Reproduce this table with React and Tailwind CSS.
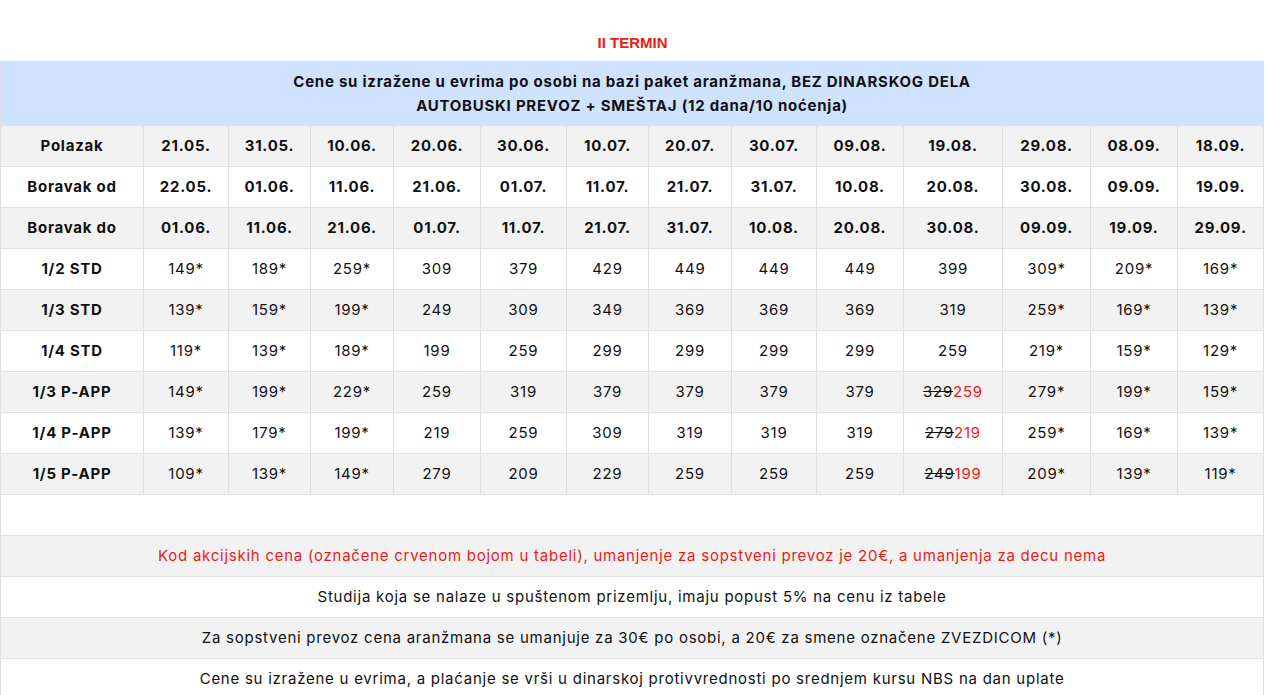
import React from "react";

const widths = [143, 85, 82, 83, 87, 86, 82, 83, 85, 87, 99, 88, 87, 86];

const dateRows = [
  ["Polazak", ["21.05.", "31.05.", "10.06.", "20.06.", "30.06.", "10.07.", "20.07.", "30.07.", "09.08.", "19.08.", "29.08.", "08.09.", "18.09."]],
  ["Boravak od", ["22.05.", "01.06.", "11.06.", "21.06.", "01.07.", "11.07.", "21.07.", "31.07.", "10.08.", "20.08.", "30.08.", "09.09.", "19.09."]],
  ["Boravak do", ["01.06.", "11.06.", "21.06.", "01.07.", "11.07.", "21.07.", "31.07.", "10.08.", "20.08.", "30.08.", "09.09.", "19.09.", "29.09."]],
];

const priceRows = [
  ["1/2 STD", ["149*", "189*", "259*", "309", "379", "429", "449", "449", "449", "399", "309*", "209*", "169*"]],
  ["1/3 STD", ["139*", "159*", "199*", "249", "309", "349", "369", "369", "369", "319", "259*", "169*", "139*"]],
  ["1/4 STD", ["119*", "139*", "189*", "199", "259", "299", "299", "299", "299", "259", "219*", "159*", "129*"]],
  ["1/3 P-APP", ["149*", "199*", "229*", "259", "319", "379", "379", "379", "379", ["329", "259"], "279*", "199*", "159*"]],
  ["1/4 P-APP", ["139*", "179*", "199*", "219", "259", "309", "319", "319", "319", ["279", "219"], "259*", "169*", "139*"]],
  ["1/5 P-APP", ["109*", "139*", "149*", "279", "209", "229", "259", "259", "259", ["249", "199"], "209*", "139*", "119*"]],
];

const notes = [
  ["Kod akcijskih cena (označene crvenom bojom u tabeli), umanjenje za sopstveni prevoz je 20€, a umanjenja za decu nema", true],
  ["Studija koja se nalaze u spuštenom prizemlju, imaju popust 5% na cenu iz tabele", false],
  ["Za sopstveni prevoz cena aranžmana se umanjuje za 30€ po osobi, a 20€ za smene označene ZVEZDICOM (*)", false],
  ["Cene su izražene u evrima, a plaćanje se vrši u dinarskoj protivvrednosti po srednjem kursu NBS na dan uplate", false],
];

const cell = "border border-[#dedee3] text-center align-middle p-0";

function Price({ v }) {
  if (Array.isArray(v)) {
    return (
      <>
        <span className="line-through">{v[0]}</span>
        <span className="text-[#f01818]">{v[1]}</span>
      </>
    );
  }
  return v;
}

export default function App() {
  let stripe = 0;
  const bg = () => (stripe++ % 2 === 0 ? "bg-[#f2f2f2]" : "bg-white");

  return (
    <div className="bg-white min-h-screen pt-[34px] font-['Inter',sans-serif] text-[15px] tracking-[0.75px] text-[#111]">
      <h3 className="text-center font-['Liberation_Sans',Arial,sans-serif] font-bold text-[15px] tracking-normal leading-[18px] text-[#f01818] mb-[9px]">
        II TERMIN
      </h3>
      <table className="table-fixed border-collapse w-[1263px]">
        <colgroup>
          {widths.map((w, i) => (
            <col key={i} style={{ width: w }} />
          ))}
        </colgroup>
        <tbody>
          <tr className="bg-[#cfe2ff]">
            <td colSpan={14} className={`${cell} h-[64px] font-bold leading-[24px] py-[7px]`}>
              Cene su izražene u evrima po osobi na bazi paket aranžmana, BEZ DINARSKOG DELA
              <br />
              AUTOBUSKI PREVOZ + SMEŠTAJ (12 dana/10 noćenja)
            </td>
          </tr>
          {dateRows.map(([label, vals]) => (
            <tr key={label} className={bg()}>
              <td className={`${cell} h-[41px] font-bold`}>{label}</td>
              {vals.map((v, i) => (
                <td key={i} className={`${cell} font-bold`}>
                  {v}
                </td>
              ))}
            </tr>
          ))}
          {priceRows.map(([label, vals]) => (
            <tr key={label} className={bg()}>
              <td className={`${cell} h-[41px] font-bold`}>{label}</td>
              {vals.map((v, i) => (
                <td key={i} className={cell}>
                  <Price v={v} />
                </td>
              ))}
            </tr>
          ))}
          <tr className={bg()}>
            <td colSpan={14} className={`${cell} h-[41px]`}></td>
          </tr>
          {notes.map(([text, red]) => (
            <tr key={text} className={bg()}>
              <td colSpan={14} className={`${cell} h-[41px] ${red ? "text-[#f01818]" : ""}`}>
                {text}
              </td>
            </tr>
          ))}
        </tbody>
      </table>
    </div>
  );
}
